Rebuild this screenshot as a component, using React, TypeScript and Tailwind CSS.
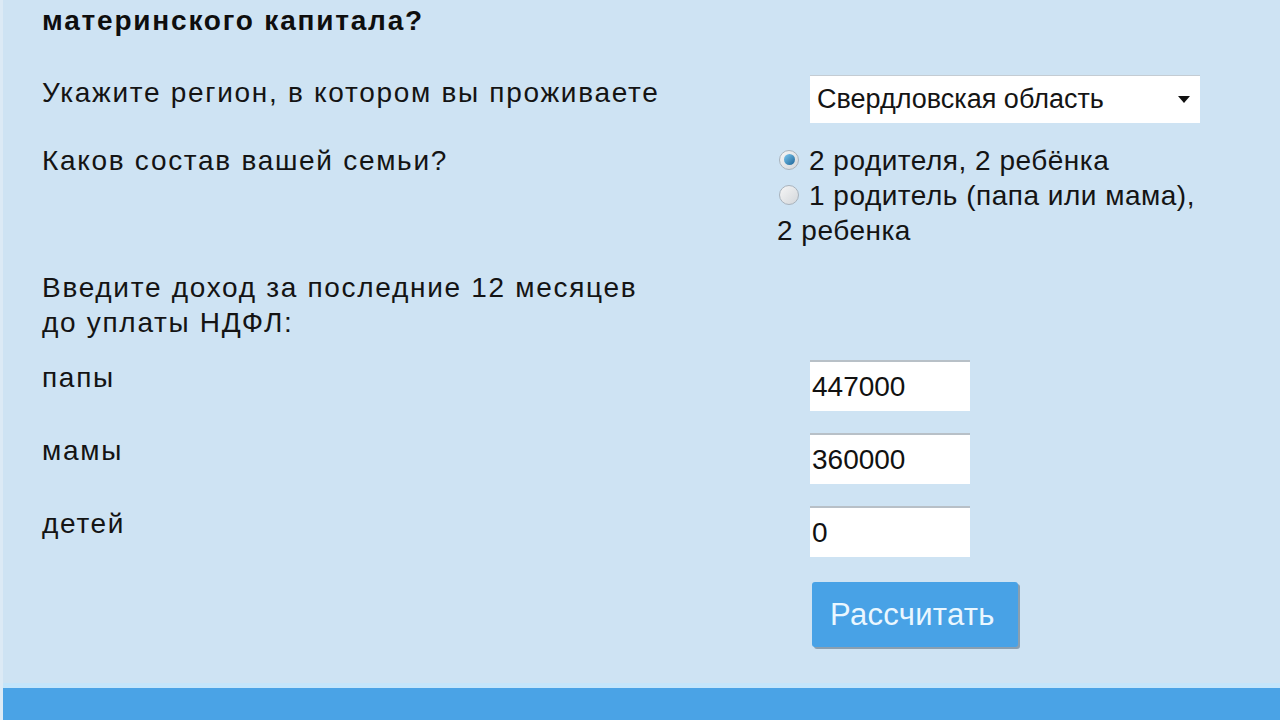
import React, { useState } from "react";

const FONT = { fontFamily: '"Liberation Sans", Arial, sans-serif' };

function Radio({ checked }: { checked: boolean }) {
  return (
    <span className="relative top-[-3px] mr-[10px] inline-flex h-[20px] w-[20px] shrink-0 items-center justify-center rounded-full border border-[#a9b3bc] bg-gradient-to-br from-[#f6f6f6] to-[#d3d7db] align-middle">
      {checked && (
        <span className="h-[11px] w-[11px] rounded-full bg-gradient-to-br from-[#7cc8f0] to-[#1b6699]" />
      )}
    </span>
  );
}

function Field({ value }: { value: string }) {
  return (
    <input
      type="text"
      defaultValue={value}
      className="ml-[33px] h-[51px] w-[160px] border-t-2 border-[#b8c0c7] bg-white px-[2px] text-[28px] text-[#111] outline-none"
      style={FONT}
    />
  );
}

// строки формы: подпись слева, поле справа
function Row({ label, children, className }: { label?: string; children: React.ReactNode; className: string }) {
  return (
    <div className={"grid grid-cols-[735px_1fr] " + className}>
      <div className="text-[28px] tracking-[1.7px]">{label}</div>
      <div>{children}</div>
    </div>
  );
}

export default function App() {
  const [family, setFamily] = useState(0);

  return (
    <div
      className="flex h-[720px] w-[1280px] flex-col overflow-hidden border-l-[3px] border-[#dceaf5] bg-[#cee3f3] text-[27px] leading-[35px] text-[#141414]"
      style={FONT}
    >
      <div className="flex-1 pl-[39px]">
        <h2 className="pt-[3px] text-[28px] font-bold leading-[35px] tracking-[1.8px] text-[#0e0e0e]">
          материнского капитала?
        </h2>

        <Row label="Укажите регион, в котором вы проживаете" className="mt-[37px]">
          <div className="ml-[33px] flex h-[48px] w-[390px] items-center justify-between border-t border-[#c4ccd3] bg-white pl-[7px] pr-[10px]">
            <span>Свердловская область</span>
            <span className="h-0 w-0 border-x-[6px] border-t-[7px] border-x-transparent border-t-[#111]" />
          </div>
        </Row>

        <Row label="Каков состав вашей семьи?" className="mt-[20px]">
          <div className="w-[425px] text-[28px] tracking-[0.5px]">
            <label className="block cursor-pointer" onClick={() => setFamily(0)}>
              <span className="ml-[2px]">
                <Radio checked={family === 0} />
              </span>
              2 родителя, 2 ребёнка
            </label>
            <label className="block cursor-pointer" onClick={() => setFamily(1)}>
              <span className="ml-[2px]">
                <Radio checked={family === 1} />
              </span>
              1 родитель (папа или мама), 2 ребенка
            </label>
          </div>
        </Row>

        <div className="mt-[22px] w-[640px] text-[28px] tracking-[1.7px]">
          Введите доход за последние 12 месяцев до уплаты НДФЛ:
        </div>

        <Row label="папы" className="mt-[20px]">
          <Field value="447000" />
        </Row>
        <Row label="мамы" className="mt-[22px]">
          <Field value="360000" />
        </Row>
        <Row label="детей" className="mt-[22px]">
          <Field value="0" />
        </Row>

        <Row className="mt-[25px]">
          <button
            type="button"
            className="ml-[35px] h-[65px] w-[206px] rounded-[3px] bg-[#48a2e6] pl-[18px] text-left text-[31px] tracking-[0.3px] text-[#eaf7ff] shadow-[2px_2px_0_#8a9fb0]"
            style={FONT}
          >
            Рассчитать
          </button>
        </Row>
      </div>

      <div className="h-[5px] bg-[#c3e5fb]" />
      <div className="h-[32px] bg-[#4aa3e6]" />
    </div>
  );
}
